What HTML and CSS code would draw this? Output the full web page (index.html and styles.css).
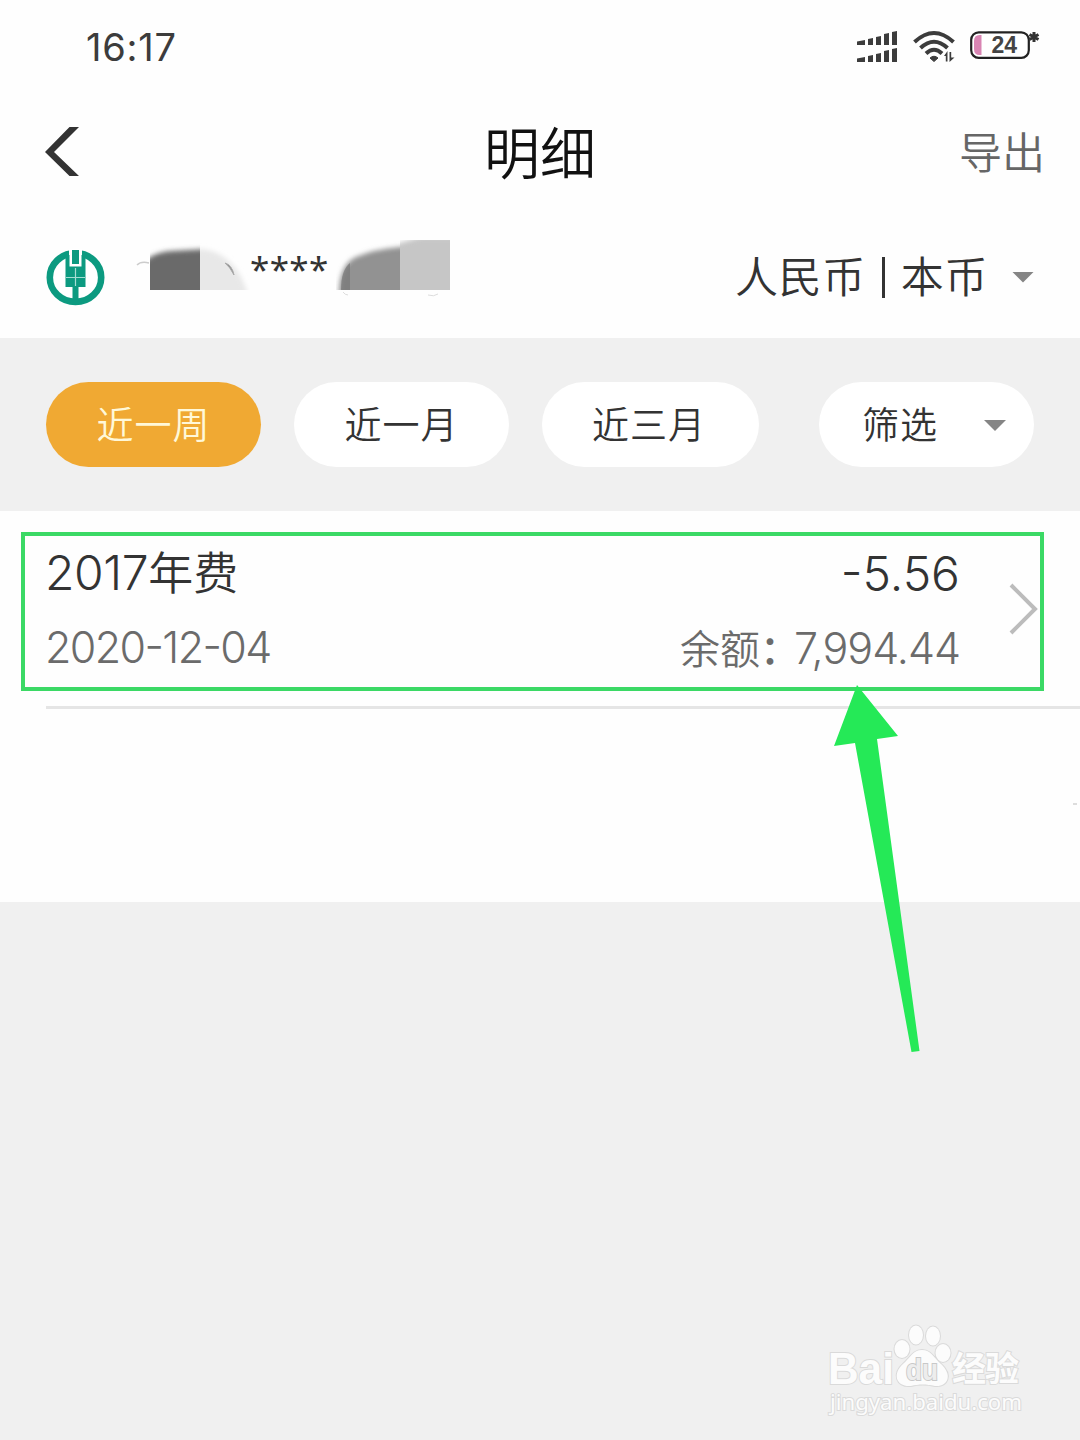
FILE: index.html
```html
<!DOCTYPE html>
<html lang="zh-CN">
<head>
<meta charset="utf-8">
<title>明细</title>
<link rel="stylesheet" href="styles.css">
</head>
<body>
<main class="screen">
  <header class="status-bar">
    <span class="clock">16:17</span>
    <svg class="status-icons" width="190" height="40" viewBox="0 0 190 40">
      <g fill="#3c3c3c">
        <path d="M7 20v-3.500l8-1.500v5zM18 20v-6l5-1v7zM26 20v-8l5-1v9zM34 20V9l5-1v12zM42 20V7l5-1v14z"/>
        <path d="M7 37v-3.500l8-1.500v5zM18 37v-6l5-1v7zM26 37v-8l5-1v9zM34 37V26l5-1v12zM42 37V24l5-1v14z"/>
        <path d="M80 33q4-3.500 8 0l-4 3.500z" stroke="#3c3c3c"/>
        <path d="M97.500 26v10.500h-1.700v-5.500h-1.800zM99.500 37V27h1.700v5.500h3.300z"/>
      </g>
      <g fill="none" stroke="#3c3c3c" stroke-width="4">
        <path d="M64.500 17Q84 -1 103.500 17"/><path d="M70.500 23Q84 10.500 97.500 23"/><path d="M76 28.500Q84 21 92 28.500"/>
      </g>
      <rect x="121.200" y="7.300" width="57.600" height="25.500" rx="7.500" fill="#fff" stroke="#222" stroke-width="2.200"/>
      <path d="M131.500 10v20h-2q-5.500 0-5.500-6v-8q0-6 5.500-6z" fill="#d985b3"/>
      <text class="battery-text" x="141.500" y="27.500">24</text>
      <path d="M184 7v10M179.500 9.500l9 5M179.500 14.500l9-5" stroke="#333" stroke-width="3"/>
    </svg>
  </header>

  <nav class="title-bar">
    <svg class="back" width="36" height="52" viewBox="0 0 36 52"><path d="M24.500 1H34L9 26l25 24h-9.500L0 26z" fill="#333"/></svg>
    <h1 class="title">明细</h1>
    <span class="export">导出</span>
  </nav>

  <section class="account">
    <svg class="bank-logo" width="60" height="60" viewBox="0 0 60 60">
      <ellipse cx="30.500" cy="30.500" rx="25.700" ry="24.400" fill="#fff" stroke="#0c9a80" stroke-width="6.600"/>
      <path d="M24 2h13v18H24z" fill="#fff"/>
      <path d="M20.500 8h4v11.500h12V8h4v32h-7v16h-6V40h-7zM27 3h7v14h-7z" fill="#0c9a80"/>
      <path d="M30.500 21v18M21 30.500h19" fill="none" stroke="#a5ddd2" stroke-width="1.200"/>
    </svg>
    <div class="account-number">
      <svg width="114" height="60" viewBox="0 0 114 60">
        <defs>
          <filter id="soft" x="-20%" y="-20%" width="140%" height="140%"><feGaussianBlur stdDeviation="2.500"/></filter>
          <clipPath id="dark"><path d="M14 0h50v52H14z"/></clipPath>
          <clipPath id="light"><path d="M64 0h50v52H64z"/></clipPath>
        </defs>
        <path d="M1 27q4-4 12-2" fill="none" stroke="#ccc" stroke-width="1.500"/>
        <g clip-path="url(#dark)"><path d="M5 65V29Q12 15 35 13L70 11v54z" fill="#6b6b6b" filter="url(#soft)"/></g>
        <g clip-path="url(#light)"><path d="M50 65V11h15q17 1 30 14t19 40z" fill="#e8e8e8" filter="url(#soft)"/></g>
        <path d="M89 25q7 2 9 12-4-8-9-12z" fill="#888" stroke="#aaa"/>
      </svg>
      <span class="stars">****</span>
      <svg width="116" height="60" viewBox="0 0 116 60">
        <defs><clipPath id="mid"><path d="M0 2h64v50H0z"/></clipPath><clipPath id="pale"><path d="M64 2h50v50H64z"/></clipPath></defs>
        <g clip-path="url(#mid)"><path d="M3 65Q1 27 20 19T64 9h9v56z" fill="#929292" filter="url(#soft)"/><path d="M5 52q0-20 9-27v27z" fill="#777" opacity=".7"/></g>
        <g clip-path="url(#pale)"><path d="M50 65V9L84-1h46v66z" fill="#c6c6c6" filter="url(#soft)"/></g>
        <path d="M7 54q2 3 5 3M92 57q6 2 10-1" fill="none" stroke="#ddd"/>
      </svg>
    </div>
    <div class="currency"><span class="glyphs">人民币</span><i class="divider"></i><span class="glyphs">本币</span></div>
    <i class="caret"></i>
  </section>

  <section class="filters">
    <button class="pill active">近一周</button>
    <button class="pill">近一月</button>
    <button class="pill wide">近三月</button>
    <button class="pill select">筛选<i class="caret"></i></button>
  </section>

  <section class="list">
    <article class="record">
      <div class="row primary"><span class="name"><span class="year">2017</span>年费</span><span class="amount">-5.56</span></div>
      <div class="row secondary"><span class="date">2020-12-04</span><span class="balance"><span class="label">余额<span class="colon">：</span></span>7,994.44</span></div>
      <svg class="chevron" width="32" height="52" viewBox="0 0 32 52"><path d="M3 2l24 24L3 50" fill="none" stroke="#bcbcbc" stroke-width="4"/></svg>
    </article>
    <hr class="rule">
    <i class="speck"></i>
  </section>

  <svg class="arrow" width="90" height="370" viewBox="0 0 90 370"><path d="M27 0L68 51l-21 3L89.500 366l-8 1L25 58 4 61z" fill="#25e957"/></svg>

  <footer class="watermark">
    <svg width="210" height="100" viewBox="0 0 210 100">
      <g class="mark">
        <text class="brand" x="7" y="64" textLength="66" lengthAdjust="spacingAndGlyphs">Bai</text>
        <ellipse cx="81" cy="29" rx="7.500" ry="9"/><ellipse cx="95" cy="15" rx="7" ry="9.500"/><ellipse cx="112" cy="16" rx="7" ry="9.500"/><ellipse cx="122" cy="33" rx="7.500" ry="9"/>
        <path d="M101 30c9 0 12 8 19 14 12 11 7 23-6 22-9-2-16-2-24 0-15 1-19-12-8-22 7-6 10-14 19-14z"/>
        <text class="du" x="85" y="60" textLength="32" lengthAdjust="spacingAndGlyphs">du</text>
        <text class="brand-cn" x="131" y="61" textLength="67">经验</text>
        <text class="domain" x="9" y="90" textLength="192" lengthAdjust="spacingAndGlyphs">jingyan.baidu.com</text>
      </g>
    </svg>
  </footer>
</main>
</body>
</html>
```
FILE: styles.css
```css
* { box-sizing: border-box; }
body { margin: 0; }
.screen {
  position: relative;
  width: 1080px;
  height: 1440px;
  overflow: hidden;
  background: #f0f0f0;
  color: #333;
  font-family: "Noto Sans CJK SC", sans-serif;
  font-weight: 350;
}
.status-bar {
  display: flex;
  justify-content: space-between;
  align-items: center;
  height: 94px;
  padding: 0 40px 4px 86px;
  background: #fefefe;
}
.clock { font: 400 38px/1 Inter, sans-serif; letter-spacing: .8px; padding-top: 4px; color: #3c3c3c; }
.battery-text { font: 700 23px "Liberation Sans", sans-serif; fill: #444; }
.title-bar {
  display: grid;
  grid-template-columns: 1fr auto 1fr;
  align-items: center;
  height: 118px;
  padding: 0 45px 2px 45px;
  background: #fefefe;
}
.title { margin: 0; padding-bottom: 4px; font-size: 56px; line-height: 1; font-weight: 350; color: #111; }
.export { justify-self: end; margin-right: -10px; padding-bottom: 4px; font-size: 43px; line-height: 1; color: #666; }
.account {
  display: flex;
  align-items: center;
  height: 126px;
  padding: 4px 46px 0 45px;
  background: #fefefe;
}
.account-number { display: flex; margin: -18px auto 0 31px; height: 60px; }
.stars { width: 86px; font: 400 35px/62px "Noto Sans", sans-serif; letter-spacing: .4px; }
.currency { display: flex; align-items: center; font-size: 43px; line-height: 1; letter-spacing: .6px; }
.glyphs { padding-bottom: 5px; }
.divider { width: 3px; height: 41px; margin: 0 16px; background: #333; }
.caret {
  width: 22px;
  height: 11px;
  margin-left: 24px;
  background: #858585;
  clip-path: polygon(0 0, 100% 0, 50% 100%);
}
.filters { display: flex; height: 173px; padding: 44px 46px; gap: 33px; }
.pill {
  display: flex;
  align-items: center;
  justify-content: center;
  width: 215px;
  height: 85px;
  padding: 0 0 4px;
  border: 0;
  border-radius: 43px;
  background: #fff;
  color: #333;
  font: inherit;
  font-size: 37px;
  letter-spacing: 1px;
}
.pill.active { background: #f0a933; color: #fff8d8; }
.pill.wide { width: 217px; padding-right: 3px; }
.pill.select { margin-left: auto; justify-content: flex-start; padding-left: 43px; }
.pill.select .caret { margin: 6px 0 0 46px; }
.list { height: 391px; padding-top: 21px; background: #fefefe; }
.record {
  position: relative;
  width: 1023px;
  height: 159px;
  margin-left: 21px;
  padding: 0 80px 0 20px;
  border: 4px solid #3bd965;
}
.row { display: flex; justify-content: space-between; align-items: center; }
.primary { height: 74px; font-size: 45px; }
.secondary { height: 73px; font-size: 40px; color: #6b6b6b; }
.name { margin-top: -5px; }
.year, .amount, .date, .balance { font-family: Inter, sans-serif; font-feature-settings: "case"; }
.year, .amount { font-size: 48px; }
.year { letter-spacing: -.4px; }
.date, .balance { font-size: 43px; letter-spacing: -1px; }
.date { letter-spacing: -1.6px; }
.label { font-family: "Noto Sans CJK SC", sans-serif; font-size: 40px; letter-spacing: 0; }
.colon { margin-right: -6px; font-weight: 500; }
.chevron { position: absolute; right: 0; top: 47px; }
.rule { height: 3px; margin: 15px 0 0 46px; border: 0; background: #e5e5e5; }
.speck { display: block; width: 4px; height: 2px; margin: 94px 3px 0 auto; background: #ddd; }
.arrow { position: absolute; left: 830px; top: 685px; }
.watermark { position: absolute; left: 821px; top: 1320px; }
.mark { fill: #fcfcfc; stroke: #dadada; stroke-width: 2px; paint-order: stroke; }
.brand { font: 700 44px "Liberation Sans", sans-serif; }
.du { font: 700 29px "Liberation Sans", sans-serif; fill: #ededed; stroke: #c8c8c8; }
.brand-cn { font: 700 34px "Noto Sans CJK SC", sans-serif; }
.domain { font: 400 22px "Noto Sans", sans-serif; }
```
